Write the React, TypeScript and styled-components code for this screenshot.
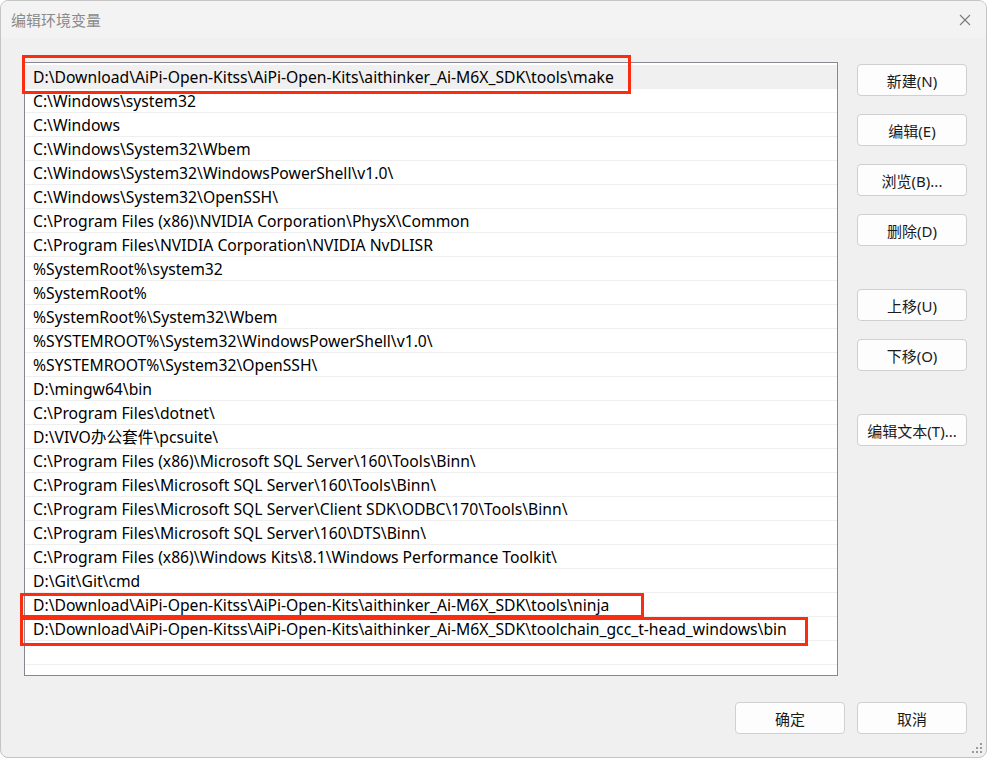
import React from "react";
import styled, { createGlobalStyle } from "styled-components";

const Global = createGlobalStyle`
  html, body { margin: 0; padding: 0; background: #ffffff; }
  * { box-sizing: border-box; }
`;

const FONT = `"Noto Sans", "Noto Sans CJK SC", sans-serif`;

const Window = styled.div`
  position: relative;
  width: 987px;
  height: 758px;
  background: #f0f0f0;
  border: 1px solid #c4c4c4;
  border-radius: 8px;
  font-family: ${FONT};
  color: #000;
  display: flex;
  flex-direction: column;
  overflow: hidden;
`;

const TitleBar = styled.div`
  height: 37px;
  display: flex;
  align-items: center;
  justify-content: space-between;
  padding: 0 14px 0 10px;
  background: #f3f3f3;
`;

const Title = styled.span`
  font-size: 15px;
  color: #8a8a8a;
  font-family: "Noto Sans CJK SC", sans-serif;
`;

const CloseIcon = styled.svg`
  width: 14px;
  height: 14px;
  display: block;
`;

const Body = styled.div`
  flex: 1;
  display: grid;
  grid-template-columns: 814px 110px;
  column-gap: 19px;
  padding: 24px 0 0 23px;
  align-items: start;
`;

const ListBox = styled.div`
  position: relative;
  height: 614px;
  background: #ffffff;
  border: 1px solid #868790;
  padding-top: 2px;
`;

const Row = styled.div<{ $selected?: boolean }>`
  height: 24px;
  padding-left: 8px;
  display: flex;
  align-items: center;
  font-size: 15.7px;
  white-space: nowrap;
  border-bottom: 1px solid #efefef;
  background: ${(p) => (p.$selected ? "#f0f0f0" : "transparent")};
`;

const Highlight = styled.div<{ $x: number; $y: number; $w: number; $h: number }>`
  position: absolute;
  left: ${(p) => p.$x}px;
  top: ${(p) => p.$y}px;
  width: ${(p) => p.$w}px;
  height: ${(p) => p.$h}px;
  border: 3px solid #fb2d10;
  pointer-events: none;
`;

const Side = styled.div`
  display: flex;
  flex-direction: column;
  padding-top: 2px;
`;

const Button = styled.button<{ $gapTop?: number }>`
  width: 110px;
  height: 32px;
  margin-top: ${(p) => p.$gapTop ?? 0}px;
  background: #fdfdfd;
  border: 1px solid #d0d0d0;
  border-radius: 4px;
  font-family: ${FONT};
  font-size: 15px;
  color: #1a1a1a;
  padding: 0;
`;

const Footer = styled.div`
  height: 55px;
  display: flex;
  justify-content: flex-end;
  gap: 12px;
  padding-right: 19px;
  padding-top: 0;
`;

const Grip = styled.svg`
  position: absolute;
  right: 2px;
  bottom: 2px;
  width: 14px;
  height: 14px;
`;

const paths = [
  "D:\\Download\\AiPi-Open-Kitss\\AiPi-Open-Kits\\aithinker_Ai-M6X_SDK\\tools\\make",
  "C:\\Windows\\system32",
  "C:\\Windows",
  "C:\\Windows\\System32\\Wbem",
  "C:\\Windows\\System32\\WindowsPowerShell\\v1.0\\",
  "C:\\Windows\\System32\\OpenSSH\\",
  "C:\\Program Files (x86)\\NVIDIA Corporation\\PhysX\\Common",
  "C:\\Program Files\\NVIDIA Corporation\\NVIDIA NvDLISR",
  "%SystemRoot%\\system32",
  "%SystemRoot%",
  "%SystemRoot%\\System32\\Wbem",
  "%SYSTEMROOT%\\System32\\WindowsPowerShell\\v1.0\\",
  "%SYSTEMROOT%\\System32\\OpenSSH\\",
  "D:\\mingw64\\bin",
  "C:\\Program Files\\dotnet\\",
  "D:\\VIVO办公套件\\pcsuite\\",
  "C:\\Program Files (x86)\\Microsoft SQL Server\\160\\Tools\\Binn\\",
  "C:\\Program Files\\Microsoft SQL Server\\160\\Tools\\Binn\\",
  "C:\\Program Files\\Microsoft SQL Server\\Client SDK\\ODBC\\170\\Tools\\Binn\\",
  "C:\\Program Files\\Microsoft SQL Server\\160\\DTS\\Binn\\",
  "C:\\Program Files (x86)\\Windows Kits\\8.1\\Windows Performance Toolkit\\",
  "D:\\Git\\Git\\cmd",
  "D:\\Download\\AiPi-Open-Kitss\\AiPi-Open-Kits\\aithinker_Ai-M6X_SDK\\tools\\ninja",
  "D:\\Download\\AiPi-Open-Kitss\\AiPi-Open-Kits\\aithinker_Ai-M6X_SDK\\toolchain_gcc_t-head_windows\\bin",
  "",
];

const sideButtons: { label: string; gap: number }[] = [
  { label: "新建(N)", gap: 0 },
  { label: "编辑(E)", gap: 18 },
  { label: "浏览(B)...", gap: 18 },
  { label: "删除(D)", gap: 18 },
  { label: "上移(U)", gap: 43 },
  { label: "下移(O)", gap: 18 },
  { label: "编辑文本(T)...", gap: 43 },
];

export default function App() {
  return (
    <>
      <Global />
      <Window>
        <TitleBar>
          <Title>编辑环境变量</Title>
          <CloseIcon viewBox="0 0 14 14">
            <path d="M2 2 L12 12 M12 2 L2 12" stroke="#7a7a7a" strokeWidth="1.1" fill="none" />
          </CloseIcon>
        </TitleBar>
        <Body>
          <ListBox>
            {paths.map((p, i) => (
              <Row key={i} $selected={i === 0}>
                {p}
              </Row>
            ))}
            <Highlight $x={-3} $y={-8} $w={609} $h={39} />
            <Highlight $x={-5} $y={530} $w={624} $h={25} />
            <Highlight $x={-5} $y={554} $w={788} $h={29} />
          </ListBox>
          <Side>
            {sideButtons.map((b) => (
              <Button key={b.label} $gapTop={b.gap}>
                {b.label}
              </Button>
            ))}
          </Side>
        </Body>
        <Footer>
          <Button>确定</Button>
          <Button>取消</Button>
        </Footer>
        <Grip viewBox="0 0 14 14">
          {[
            [11, 3],
            [7, 7],
            [11, 7],
            [3, 11],
            [7, 11],
            [11, 11],
          ].map(([x, y], i) => (
            <rect key={i} x={x - 1} y={y - 1} width="2" height="2" fill="#9a9a9a" />
          ))}
        </Grip>
      </Window>
    </>
  );
}
